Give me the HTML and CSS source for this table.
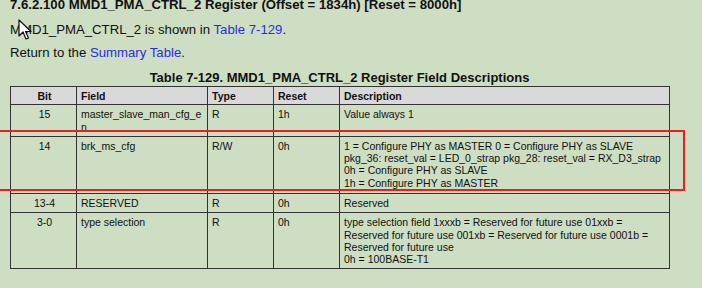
FILE: index.html
```html
<!DOCTYPE html>
<html>
<head>
<meta charset="utf-8">
<link rel="stylesheet" href="styles.css">
</head>
<body>
<div class="page">
  <h3 class="title">7.6.2.100 MMD1_PMA_CTRL_2 Register (Offset = 1834h) [Reset = 8000h]</h3>
  <p class="para first">MMD1_PMA_CTRL_2 is shown in <a class="link">Table 7-129</a>.</p>
  <p class="para">Return to the <a class="link">Summary Table</a>.</p>
  <div class="caption">Table 7-129. MMD1_PMA_CTRL_2 Register Field Descriptions</div>
  <div class="table-wrap">
    <table class="regs">
      <colgroup>
        <col class="c-bit"><col class="c-field"><col class="c-type"><col class="c-reset"><col class="c-desc">
      </colgroup>
      <thead>
        <tr><th class="center">Bit</th><th>Field</th><th>Type</th><th>Reset</th><th>Description</th></tr>
      </thead>
      <tbody>
        <tr><td class="center">15</td><td>master_slave_man_cfg_e<br>n</td><td>R</td><td>1h</td><td>Value always 1</td></tr>
        <tr class="tall"><td class="center">14</td><td>brk_ms_cfg</td><td>R/W</td><td>0h</td><td class="nowrap">1 = Configure PHY as MASTER 0 = Configure PHY as SLAVE<br>pkg_36: reset_val = LED_0_strap pkg_28: reset_val = RX_D3_strap<br>0h = Configure PHY as SLAVE<br>1h = Configure PHY as MASTER</td></tr>
        <tr><td class="center">13-4</td><td>RESERVED</td><td>R</td><td>0h</td><td>Reserved</td></tr>
        <tr class="tall2"><td class="center">3-0</td><td>type selection</td><td>R</td><td>0h</td><td class="nowrap">type selection field 1xxxb = Reserved for future use 01xxb =<br>Reserved for future use 001xb = Reserved for future use 0001b =<br>Reserved for future use<br>0h = 100BASE-T1</td></tr>
      </tbody>
    </table>
    <div class="highlight"></div>
  </div>
  <svg class="cursor" width="14" height="22" viewBox="0 0 14 22">
    <path d="M1 1 L1 17 L5 13 L8 20 L10.5 19 L7.5 12.5 L13 12.5 Z" fill="#ffffff" stroke="#111" stroke-width="1.2" stroke-linejoin="round"/>
  </svg>
</div>
</body>
</html>
```
FILE: styles.css
```css
html, body {
  margin: 0;
  padding: 0;
  background: #cddec3;
}
.page {
  position: relative;
  width: 702px;
  height: 288px;
  overflow: hidden;
  font-family: "Liberation Sans", Arial, sans-serif;
  color: #111;
  padding-left: 10px;
  box-sizing: border-box;
}
.title {
  margin: -3px 0 0 0;
  font-size: 13.2px;
  font-weight: bold;
  line-height: 15px;
}
.para {
  margin: 8px 0 0 0;
  font-size: 13.2px;
  line-height: 15px;
}
.para.first {
  margin-top: 10px;
}
.link {
  color: #2c2ce0;
}
.caption {
  margin-top: 10px;
  width: 659px;
  text-align: center;
  font-size: 13px;
  font-weight: bold;
  line-height: 15px;
}
.table-wrap {
  position: relative;
  margin-top: 1px;
}
.regs {
  border-collapse: collapse;
  table-layout: fixed;
  width: 660px;
  font-size: 10.5px;
  line-height: 12.3px;
  border: 1.5px solid #333;
}
.c-bit { width: 66px; }
.c-field { width: 131px; }
.c-type { width: 66px; }
.c-reset { width: 66px; }
.c-desc { width: 330px; }
.regs th, .regs td {
  border: 1px solid #333;
  text-align: left;
  vertical-align: top;
  padding: 3px 2px 3px 4px;
}
.regs th {
  background: #d9d9d9;
  font-weight: bold;
  padding: 3px 2px 2px 4px;
}
.regs .center {
  text-align: center;
}
.regs .nowrap {
  white-space: nowrap;
}
.regs tr.tall td {
  padding-top: 3px;
  padding-bottom: 4px;
}
.regs tr.tall2 td {
  padding-bottom: 2px;
}
.highlight {
  position: absolute;
  left: -16px;
  top: 44px;
  width: 687px;
  height: 57px;
  border: 2.5px solid #ee1c1c;
}
.cursor {
  position: absolute;
  left: 18px;
  top: 19px;
}
```
